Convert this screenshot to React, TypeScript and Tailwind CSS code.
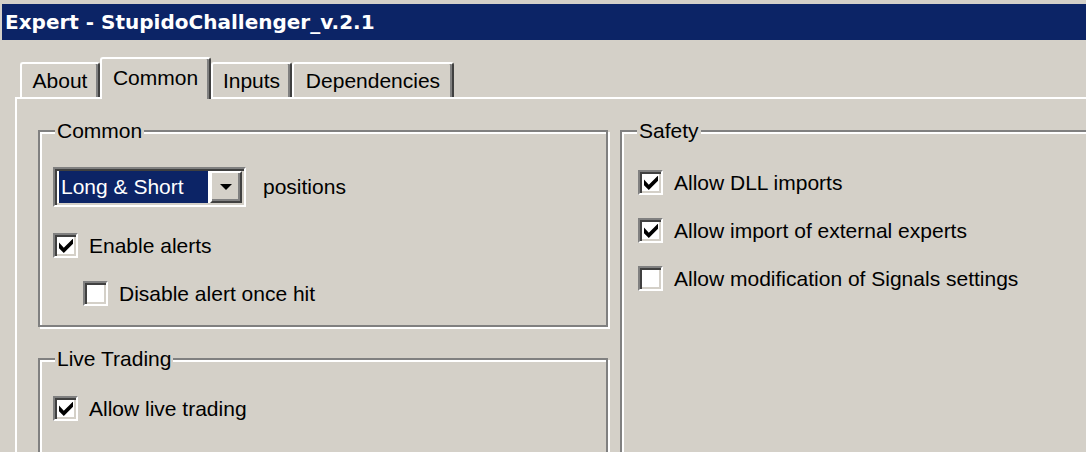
import type { ReactNode } from 'react'

const tabs = [
  { label: 'About', width: 'w-[80px]' },
  { label: 'Common', width: 'w-[111px]', active: true },
  { label: 'Inputs', width: 'w-[81px]' },
  { label: 'Dependencies', width: 'w-[162px]' },
]

function CheckBox({ checked }: { checked?: boolean }) {
  return (
    <span className="box-border flex h-[25px] w-[25px] shrink-0 items-center justify-center border-2 border-t-[#808080] border-l-[#808080] border-b-white border-r-white bg-white shadow-[inset_2px_2px_0_#404040,inset_-2px_-2px_0_#d4d0c8]">
      {checked && (
        <svg width="14" height="14" viewBox="0 0 7 7">
          <path d="M0 1.8L0 4.6L2.4 7L7 2.4L7 -0.2L2.4 4.4Z" fill="#000" />
        </svg>
      )}
    </span>
  )
}

function Option({ label, checked, className = '' }: { label: string; checked?: boolean; className?: string }) {
  return (
    <div className={`flex items-center gap-[11px] ${className}`}>
      <CheckBox checked={checked} />
      <span className="leading-none">{label}</span>
    </div>
  )
}

function Group({ title, className = '', children }: { title: string; className?: string; children: ReactNode }) {
  return (
    <div
      className={`relative box-border border-2 border-[#808080] shadow-[inset_2px_2px_0_#fff,2px_2px_0_#fff] ${className}`}
    >
      <span className="absolute -top-[13px] left-[15px] bg-[#d4d0c8] px-[2px] leading-[24px]">{title}</span>
      {children}
    </div>
  )
}

export default function App() {
  return (
    <div className="flex h-[452px] w-[1086px] flex-col overflow-hidden bg-[#d4d0c8] font-['Liberation_Sans',Arial,sans-serif] text-[21px] text-black">
      {/* caption */}
      <div className="mt-[4px] ml-[2px] flex h-[36px] shrink-0 items-center bg-[#0c2466] pl-[3px] font-['DejaVu_Sans',sans-serif] text-[20px] font-bold text-white">
        Expert - StupidoChallenger_v.2.1
      </div>

      {/* tab strip */}
      <div className="relative z-10 mt-[17px] -mb-[2px] ml-[20px] flex h-[42px] shrink-0 items-end">
        {tabs.map((t) =>
          t.active ? (
            <div
              key={t.label}
              className={`box-border flex h-[42px] ${t.width} justify-center rounded-t-[3px] border-2 border-b-0 border-t-white border-l-white border-r-[#404040] bg-[#d4d0c8] pt-[3px] shadow-[inset_-2px_0_0_#808080]`}
            >
              {t.label}
            </div>
          ) : (
            <div
              key={t.label}
              className={`mb-[2px] box-border flex h-[35px] ${t.width} justify-center rounded-t-[3px] border-2 border-b-0 border-t-white border-l-white border-r-[#404040] pt-[1px] shadow-[inset_-2px_0_0_#808080]`}
            >
              {t.label}
            </div>
          ),
        )}
      </div>

      {/* page */}
      <div className="ml-[15px] flex flex-1 gap-[12px] border-t-2 border-l-2 border-white pt-[31px] pl-[21px]">
        <div className="flex w-[570px] shrink-0 flex-col gap-[31px]">
          <Group title="Common" className="h-[197px] pt-[35px] pl-[13px]">
            <div className="flex items-center gap-[17px]">
              <div className="box-border flex h-[40px] w-[193px] border-2 border-t-[#808080] border-l-[#808080] border-b-white border-r-white bg-white p-[2px] shadow-[inset_2px_2px_0_#404040,inset_-2px_-2px_0_#d4d0c8]">
                <div className="ml-[2px] flex flex-1 items-center bg-[#0c2466] pl-[2px] text-white">Long &amp; Short</div>
                <div className="ml-[2px] box-border flex w-[32px] items-center justify-center border-2 border-t-white border-l-white border-r-[#404040] border-b-[#404040] bg-[#d4d0c8] shadow-[inset_-2px_-2px_0_#808080]">
                  <svg width="12" height="6" viewBox="0 0 12 6">
                    <path d="M0 0H12L6 6Z" fill="#000" />
                  </svg>
                </div>
              </div>
              <span>positions</span>
            </div>
            <Option label="Enable alerts" checked className="mt-[26px]" />
            <Option label="Disable alert once hit" className="mt-[23px] ml-[30px]" />
          </Group>

          <Group title="Live Trading" className="h-[140px] pt-[36px] pl-[13px]">
            <Option label="Allow live trading" checked />
          </Group>
        </div>

        <Group title="Safety" className="h-[400px] flex-1 -mr-[20px] pt-[38px] pl-[16px]">
          <div className="flex flex-col gap-[23px]">
            <Option label="Allow DLL imports" checked />
            <Option label="Allow import of external experts" checked />
            <Option label="Allow modification of Signals settings" />
          </div>
        </Group>
      </div>
    </div>
  )
}
